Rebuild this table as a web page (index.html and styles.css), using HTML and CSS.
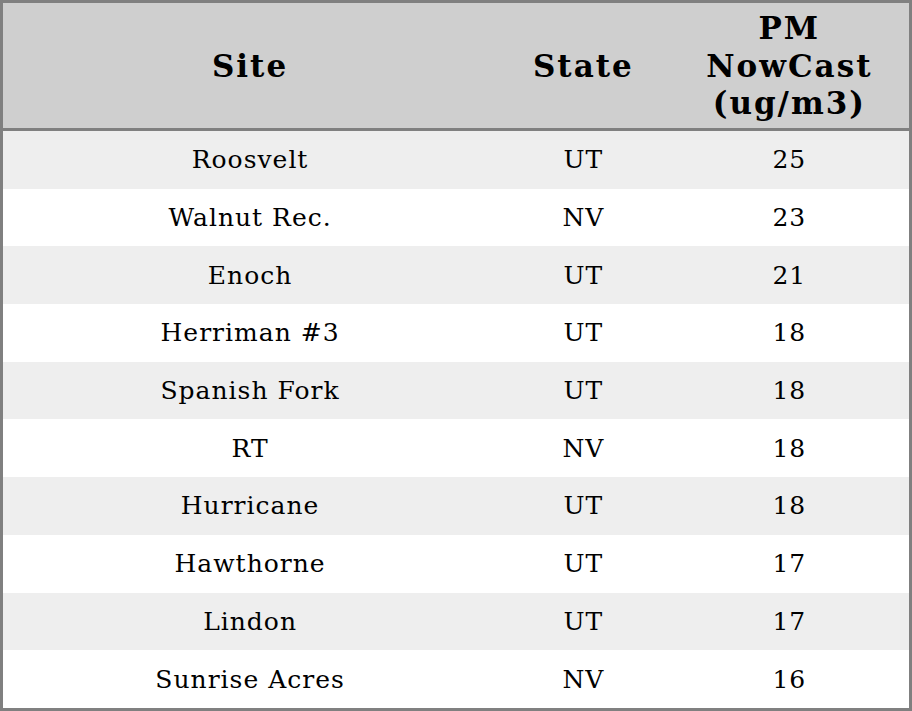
FILE: index.html
```html
<!DOCTYPE html>
<html>
<head>
<meta charset="utf-8">
<link rel="stylesheet" href="styles.css">
</head>
<body>
<table class="aq">
  <colgroup>
    <col class="c-site">
    <col class="c-state">
    <col class="c-pm">
  </colgroup>
  <thead>
    <tr><th>Site</th><th>State</th><th>PM<br>NowCast<br>(ug/m3)</th></tr>
  </thead>
  <tbody>
    <tr><td>Roosvelt</td><td>UT</td><td>25</td></tr>
    <tr><td>Walnut Rec.</td><td>NV</td><td>23</td></tr>
    <tr><td>Enoch</td><td>UT</td><td>21</td></tr>
    <tr><td>Herriman #3</td><td>UT</td><td>18</td></tr>
    <tr><td>Spanish Fork</td><td>UT</td><td>18</td></tr>
    <tr><td>RT</td><td>NV</td><td>18</td></tr>
    <tr><td>Hurricane</td><td>UT</td><td>18</td></tr>
    <tr><td>Hawthorne</td><td>UT</td><td>17</td></tr>
    <tr><td>Lindon</td><td>UT</td><td>17</td></tr>
    <tr><td>Sunrise Acres</td><td>NV</td><td>16</td></tr>
  </tbody>
</table>
</body>
</html>
```
FILE: styles.css
```css
html, body {
  margin: 0;
  padding: 0;
  background: #fff;
}
.aq {
  width: 912px;
  height: 711px;
  border-collapse: collapse;
  border: 3px solid #808080;
  font-family: "DejaVu Serif", serif;
  color: #000;
  table-layout: fixed;
}
.c-site { width: 494px; }
.c-state { width: 172px; }
.c-pm { width: 240px; }
.aq th {
  background: #cfcfcf;
  font-size: 31px;
  font-weight: bold;
  letter-spacing: 2px;
  line-height: 37.5px;
  height: 123px;
  padding: 2px 0 0;
  text-align: center;
  border-bottom: 3px solid #808080;
}
.aq td {
  font-size: 25px;
  letter-spacing: 1px;
  height: 57.7px;
  padding: 0;
  text-align: center;
}
.aq tbody tr:nth-child(odd) td {
  background: #eeeeee;
}
```
